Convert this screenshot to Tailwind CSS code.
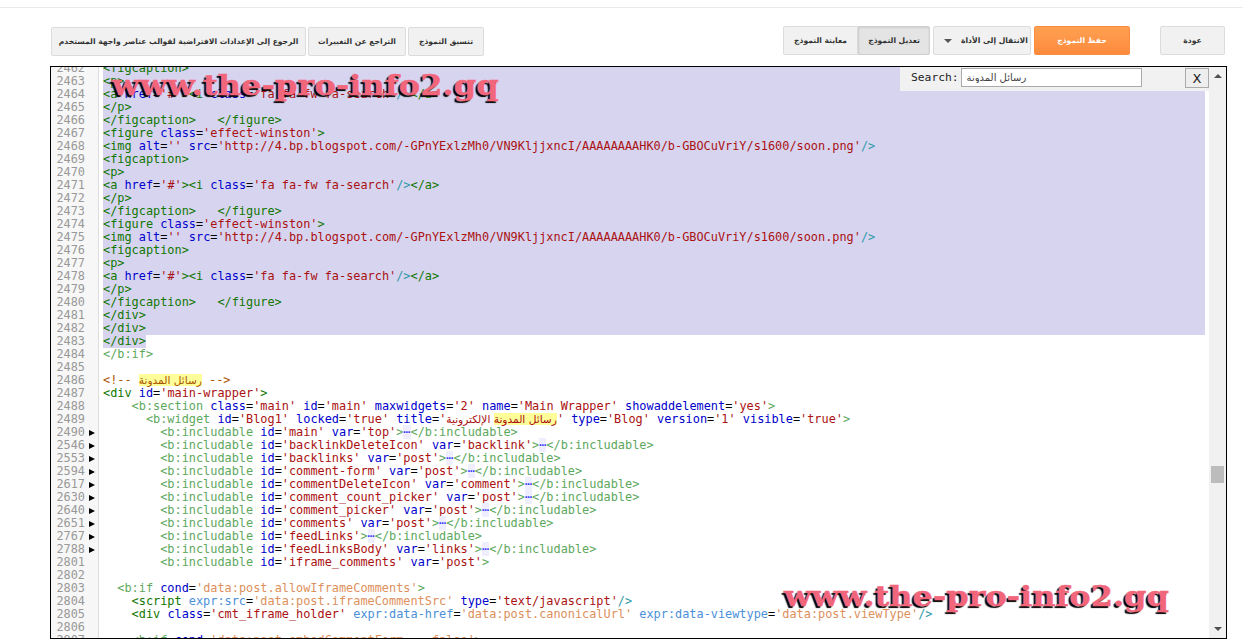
<!DOCTYPE html>
<html lang="ar">
<head>
  <meta charset="UTF-8" />
  <title>Template editor</title>
  <script src="https://cdn.jsdelivr.net/npm/@tailwindcss/browser@4"></script>
</head>
<body class="bg-white h-[644px] overflow-hidden font-['DejaVu_Sans',sans-serif]">
  <div class="h-[7px]"></div>
  <div class="border-t border-[#ebebeb] h-[59px] pl-[51px] pr-[18px] flex justify-between items-start text-[7.6px] font-bold text-[#333] whitespace-nowrap">
    <!-- left actions -->
    <div class="flex gap-[2px] mt-[19px]">
      <button class="w-[255px] h-[29px] bg-[#f1f1f1] border border-[#dcdcdc] rounded-[2px]">الرجوع إلى الإعدادات الافتراضية لقوالب عناصر واجهة المستخدم</button>
      <button class="w-[98px] h-[29px] bg-[#f1f1f1] border border-[#dcdcdc] rounded-[2px]">التراجع عن التغييرات</button>
      <button class="w-[76px] h-[29px] bg-[#f1f1f1] border border-[#dcdcdc] rounded-[2px]">تنسيق النموذج</button>
    </div>
    <!-- right actions -->
    <div class="flex mt-[18px]">
      <button class="w-[75px] h-[29px] bg-[#f1f1f1] border border-[#dcdcdc] rounded-l-[2px]">معاينة النموذج</button>
      <button class="w-[72px] h-[29px] bg-[#e4e4e4] border border-[#cfcfcf] rounded-r-[2px] shadow-[inset_0_1px_2px_rgba(0,0,0,0.1)]">تعديل النموذج</button>
      <button class="w-[98px] h-[29px] ml-[3px] bg-[#f1f1f1] border border-[#dcdcdc] rounded-[2px] flex items-center pl-[10px]">
        <span class="w-0 h-0 border-x-[4px] border-x-transparent border-t-[4px] border-t-[#555] mr-[9px]"></span>
        <span>الانتقال إلى الأداة</span>
      </button>
      <button class="w-[96px] h-[29px] ml-[3px] bg-gradient-to-b from-[#ffa052] to-[#fd8a3c] border border-[#f98c3f] rounded-[2px] text-white">حفظ النموذج</button>
      <button class="w-[65px] h-[29px] ml-[30px] bg-[#f1f1f1] border border-[#dcdcdc] rounded-[2px]">عودة</button>
    </div>
  </div>

  <!-- editor -->
  <div class="relative ml-[50px] w-[1177px] h-[573px] border border-black overflow-hidden flex bg-white">
    <div id="code" class="w-[1158px] h-full overflow-hidden font-['DejaVu_Sans_Mono','DejaVu_Sans',monospace] text-[11.88px] leading-[13px] whitespace-pre"></div>

    <!-- scrollbar -->
    <div class="w-[17px] h-full bg-[#f1f1f1] flex flex-col items-center">
      <span class="mt-[7px] w-0 h-0 border-x-[4px] border-x-transparent border-b-[4px] border-b-[#505050]"></span>
      <span class="mt-[388px] w-[13px] h-[17px] bg-[#bcbcbc]"></span>
      <span class="mt-auto mb-[7px] w-0 h-0 border-x-[4px] border-x-transparent border-t-[4px] border-t-[#505050]"></span>
    </div>

    <!-- search panel -->
    <div class="absolute top-0 left-[849px] w-[309px] h-[24px] bg-[#f1f1f1] flex items-start font-['DejaVu_Sans_Mono',monospace] text-[11.3px] text-[#222]">
      <span class="ml-[11px] mt-[4px] leading-[13px]">Search:</span>
      <input class="ml-[2px] mt-[1px] w-[182px] h-[19px] bg-white border border-[#aaa] px-[5px] text-[10px] font-['DejaVu_Sans',sans-serif] text-[#444]" dir="ltr" value="رسائل المدونة" />
      <button class="ml-[43px] mt-[1px] w-[24px] h-[20px] bg-[#eee] border border-[#aaa] font-['DejaVu_Sans',sans-serif] text-[13px] text-[#222]">X</button>
    </div>

    <!-- watermarks -->
    <div class="absolute left-[61px] top-[2px] origin-top scale-y-[0.88] font-['DejaVu_Serif',serif] font-bold text-[32px] leading-[38px] tracking-[0.1px] whitespace-nowrap text-[#f2667c] [-webkit-text-stroke:0.6px_#f2667c] [text-shadow:-2px_2px_1px_#000]">www.the-pro-info2.gq</div>
    <div class="absolute left-[733px] top-[513px] origin-top scale-y-[0.88] font-['DejaVu_Serif',serif] font-bold text-[32px] leading-[38px] whitespace-nowrap text-[#f2667c] [-webkit-text-stroke:0.6px_#f2667c] [text-shadow:-2px_2px_1px_#000]">www.the-pro-info2.gq</div>
  </div>

  <script>
    const aLine = "<a href='#'><i class='fa fa-fw fa-search'/></a>";
    const imgLine = "<img alt='' src='http://4.bp.blogspot.com/-GPnYExlzMh0/VN9KljjxncI/AAAAAAAAHK0/b-GBOCuVriY/s1600/soon.png'/>";
    const figEnd = "</figcaption>   </figure>";
    const incl = (id, v, fold) => "        <b:includable id='" + id + "'" + (v ? " var='" + v + "'" : "") + ">" + (fold ? "⋯</b:includable>" : "");

    // number, source, folded marker
    const rows = [
      [2462, "<figcaption>"], [2463, "<p>"], [2464, aLine], [2465, "</p>"], [2466, figEnd],
      [2467, "<figure class='effect-winston'>"], [2468, imgLine], [2469, "<figcaption>"], [2470, "<p>"],
      [2471, aLine], [2472, "</p>"], [2473, figEnd], [2474, "<figure class='effect-winston'>"], [2475, imgLine],
      [2476, "<figcaption>"], [2477, "<p>"], [2478, aLine], [2479, "</p>"], [2480, figEnd],
      [2481, "</div>"], [2482, "</div>"], [2483, "</div>"], [2484, "</b:if>"], [2485, ""],
      [2486, "COMMENT"], [2487, "<div id='main-wrapper'>"],
      [2488, "    <b:section class='main' id='main' maxwidgets='2' name='Main Wrapper' showaddelement='yes'>"],
      [2489, "      <b:widget id='Blog1' locked='true' title='TITLE' type='Blog' version='1' visible='true'>"],
      [2490, incl("main", "top", 1), 1], [2546, incl("backlinkDeleteIcon", "backlink", 1), 1],
      [2553, incl("backlinks", "post", 1), 1], [2594, incl("comment-form", "post", 1), 1],
      [2617, incl("commentDeleteIcon", "comment", 1), 1], [2630, incl("comment_count_picker", "post", 1), 1],
      [2640, incl("comment_picker", "post", 1), 1], [2651, incl("comments", "post", 1), 1],
      [2767, incl("feedLinks", "", 1), 1], [2788, incl("feedLinksBody", "links", 1), 1],
      [2801, incl("iframe_comments", "post")], [2802, ""],
      [2803, "  <b:if cond='data:post.allowIframeComments'>"],
      [2804, "    <script expr:src='data:post.iframeCommentSrc' type='text/javascript'/>"],
      [2805, "    <div class='cmt_iframe_holder' expr:data-href='data:post.canonicalUrl' expr:data-viewtype='data:post.viewType'/>"],
      [2806, ""], [2807, "    <b:if cond='data:post.embedCommentForm == false'>"]
    ];

    const esc = s => s.replace(/&/g, "&amp;").replace(/</g, "&lt;").replace(/>/g, "&gt;");
    const span = (cls, s) => '<span class="' + cls + '">' + esc(s) + "</span>";

    function highlight(src) {
      if (src === "COMMENT") {
        return span("text-[#a50]", "<!-- ") + '<bdi dir="rtl" class="bg-[#ffff99] text-[#a50] font-[\'DejaVu_Sans\',sans-serif] text-[10.6px]">رسائل المدونة</bdi>' + span("text-[#a50]", " -->");
      }
      let tagCls = "text-[#170]";
      return src.replace(/<\/?[\w:]+|\/?>|'[^']*'|[\w:-]+(?==)|=|⋯/g, t => {
        if (t[0] === "<") {
          tagCls = t.includes("b:") ? "text-[#5da85d]" : "text-[#170]";
          return span(tagCls, t);
        }
        if (t === "/>") return span(tagCls === "text-[#170]" ? "text-[#2f9aa8]" : tagCls, t);
        if (t === ">") return span(tagCls, t);
        if (t === "=") return span("text-black", t);
        if (t === "⋯") return span("text-[#33f] bg-[#eeeeff]", t);
        if (t === "'TITLE'") {
          return span("text-[#a11]", "'") + '<bdi dir="rtl" class="text-[#a11] font-[\'DejaVu_Sans\',sans-serif] text-[10.6px]"><span class="bg-[#ffff99]">رسائل المدونة</span> الإلكترونية</bdi>' + span("text-[#a11]", "'");
        }
        if (t[0] === "'") return span(t.startsWith("'data:") ? "text-[#dd8f5c]" : "text-[#a11]", t);
        return span(t.startsWith("expr:") ? "text-[#4a90d9]" : "text-[#00c]", t);
      });
    }

    document.getElementById("code").innerHTML = rows.map(([num, src, folded], i) => {
      const selected = num <= 2482;
      const partial = num === 2483;
      const marker = folded ? '<span class="ml-[4px] w-0 h-0 border-y-[3px] border-y-transparent border-l-[6px] border-l-black"></span>' : "";
      const bg = selected ? "flex-1 mr-[4px] bg-[#d7d4f0]" : partial ? "bg-[#d7d4f0]" : "";
      return '<div class="flex h-[13px]' + (i === 0 ? " -mt-[5px]" : "") + '">' +
        '<div class="w-[48px] shrink-0 h-[13px] bg-[#f7f7f7] border-r border-[#ddd] flex items-center text-[#999]"><span class="w-[34px] text-right">' + num + "</span>" + marker + "</div>" +
        '<div class="ml-[4px] h-[13px] ' + bg + '">' + highlight(src) + "</div></div>";
    }).join("");
  </script>
</body>
</html>
